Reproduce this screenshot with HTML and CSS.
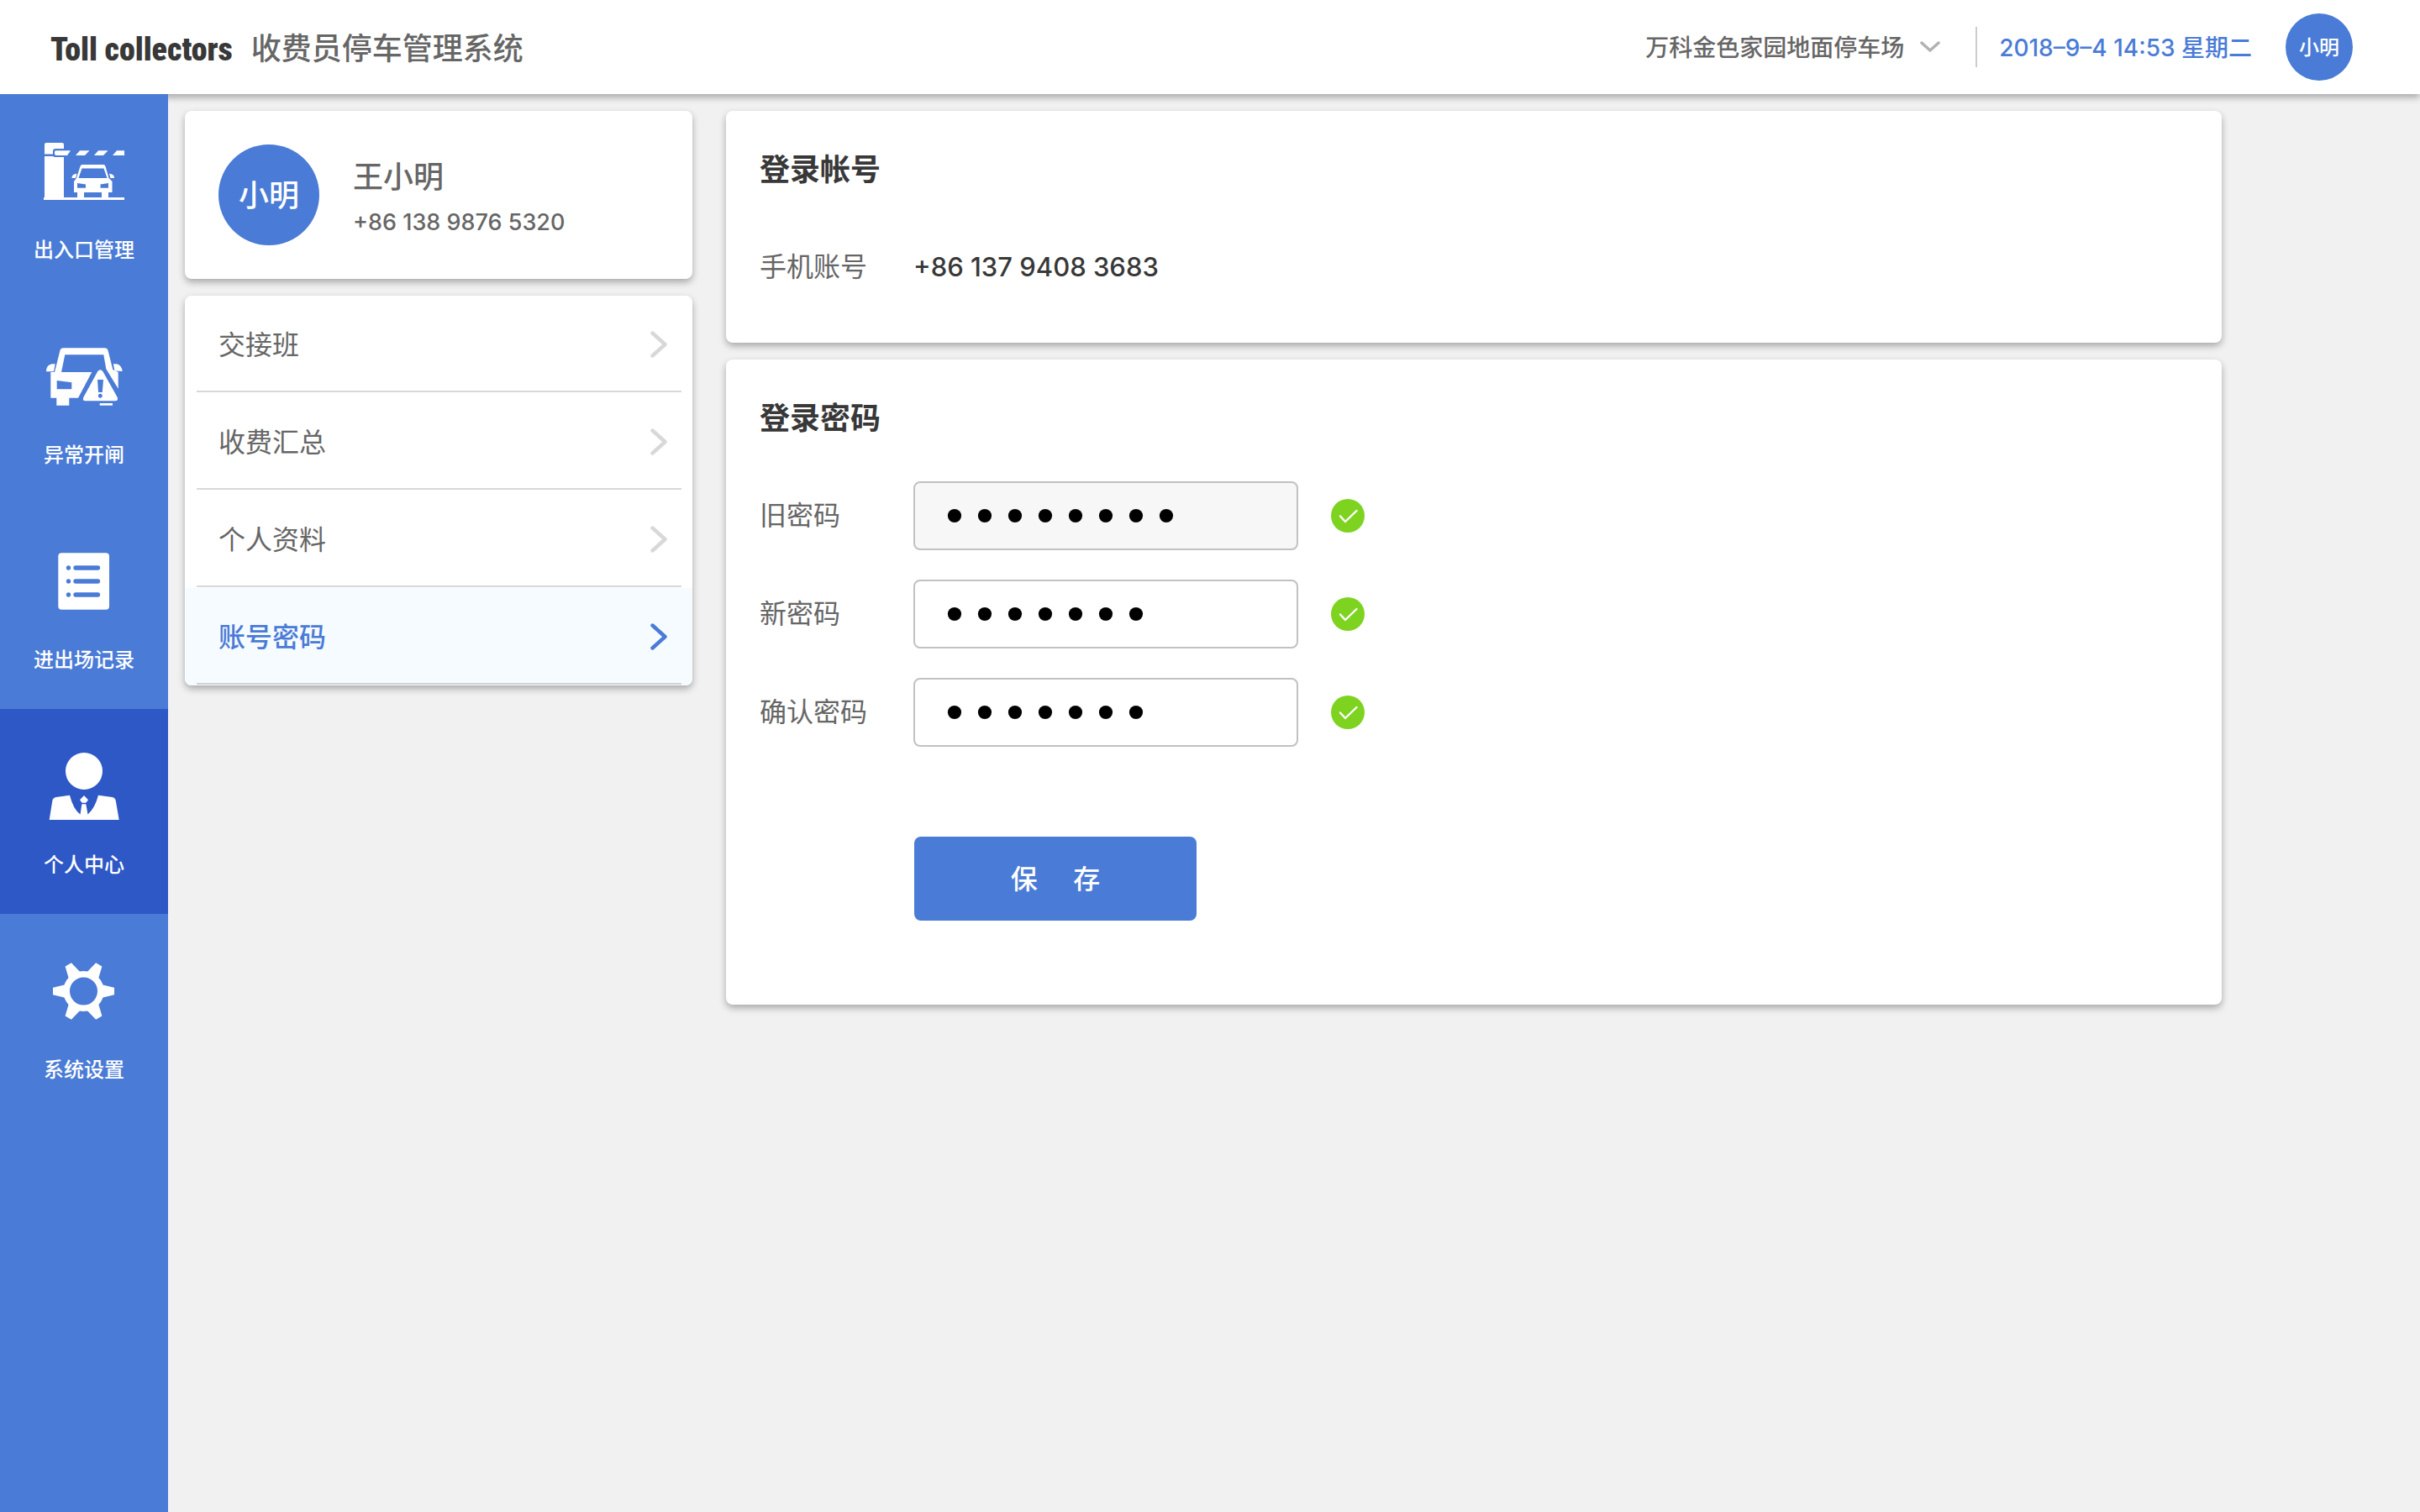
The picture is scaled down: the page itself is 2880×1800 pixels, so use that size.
FILE: index.html
```html
<!DOCTYPE html>
<html lang="zh-CN">
<head>
<meta charset="utf-8">
<meta name="viewport" content="width=device-width, initial-scale=1">
<title>收费员停车管理系统</title>
<link rel="stylesheet" href="styles.css">
</head>
<body>
<svg class="sprite" aria-hidden="true">
  <symbol id="arrow" viewBox="0 0 20 32"><path d="M2.500 2.500L17.500 16L2.500 29.500" fill="none" stroke="currentColor" stroke-width="4.400" stroke-linecap="round" stroke-linejoin="round"/></symbol>
  <symbol id="check" viewBox="0 0 40 40"><circle cx="20" cy="20" r="20" fill="#7ed321"/><path d="M11 20.500L17 27L30.500 14" fill="none" stroke="#fff" stroke-width="2.400" stroke-linecap="round" stroke-linejoin="round"/></symbol>
</svg>

<header class="topbar">
  <h1 class="brand"><span class="brand-en">Toll collectors</span><span>收费员停车管理系统</span></h1>
  <div class="topbar-tools">
    <label class="lot">
      <select class="lot-select" aria-label="停车场">
        <option>万科金色家园地面停车场</option>
      </select>
      <svg class="lot-arrow" viewBox="0 0 24 14" aria-hidden="true"><path d="M2 2L12 11L22 2" fill="none" stroke="#b2b2b2" stroke-width="3.500" stroke-linecap="round" stroke-linejoin="round"/></svg>
    </label>
    <time class="clock" datetime="2018-09-04T14:53">2018–9–4 14:53 星期二</time>
    <span class="avatar">小明</span>
  </div>
</header>

<div class="shell">
  <nav class="sidebar" aria-label="主导航">
    <a class="side-item" href="#gate">
      <svg class="side-icon" viewBox="0 0 100 80" fill="#fff" aria-hidden="true">
        <path d="M5 6H24Q26 6 26 8V13H16Q13 13 13 16V19.500H3V8Q3 6 5 6Z"/>
        <path d="M3 22H13Q14 23 16 23H26V72H3Z"/>
        <path d="M2 71H98V74H2Z"/>
        <path d="M16 15.300H34L30 21H17Q15 21 15 19V16.300Z"/>
        <path d="M45 15.300H56.500L51 21H40ZM67 15.300H78.500L73 21H62ZM89 15.300H98V21H84Z"/>
        <path fill-rule="evenodd" d="M48 32H73Q75 32 75.500 34L79.500 48L83.500 52V65H79V72H71V65H50V72H42V65H38V52L41 48L45.500 34Q46 32 48 32ZM47.500 36.500L43.500 48H77.500L73.500 36.500ZM42 54V59.700H52V55.500ZM79 54V59.700H69.500V55.500Z"/>
        <path d="M35.400 48Q35.500 43 41.500 42.700L40 48ZM86 48Q86 43 80 42.700L81.500 48Z"/>
      </svg>
      <span>出入口管理</span>
    </a>
    <a class="side-item" href="#abnormal">
      <svg class="side-icon" viewBox="0 0 100 80" fill="#fff" aria-hidden="true">
        <path fill-rule="evenodd" d="M25.500 6.300H74.500Q77.800 6.300 78.600 9.500L84.300 32L90.700 35V54.700L76.300 31.300L73.300 14.300H27.300L23 35H59.300L43 65.700H32.300V74.700H17.300V65.700H10.300V35H15L21.400 9.500Q22.200 6.300 25.500 6.300ZM17.700 45V55.300H35.300V47.300Z"/>
        <path d="M5 34.300Q5 26.500 12 25.300H15.700L14 34.300ZM95.700 34Q94.500 26.500 89 25.300H84.800L86.500 33.500Z"/>
        <path fill-rule="evenodd" d="M66.300 34Q69.300 30.500 72.300 34L89.700 65Q91 69.300 87 69.300H51.600Q47.700 69.300 49.300 65ZM66 44L67 59H71.800L73 44ZM69.300 60.800A2.500 2.500 0 1 0 69.310 60.800Z"/>
        <path d="M68.700 72H84V74.700H68.700Z"/>
      </svg>
      <span>异常开闸</span>
    </a>
    <a class="side-item" href="#records">
      <svg class="side-icon" viewBox="0 0 100 80" aria-hidden="true">
        <rect x="19.300" y="6.300" width="60.700" height="67.400" rx="4" fill="#fff"/>
        <path d="M40 24H66.500M40 40H66.500M40 56H66.500M31.500 24H31.510M31.500 40H31.510M31.500 56H31.510" stroke="#4a7bd6" stroke-width="5.300" stroke-linecap="round"/>
      </svg>
      <span>进出场记录</span>
    </a>
    <a class="side-item is-active" href="#profile" aria-current="page">
      <svg class="side-icon" viewBox="0 0 100 80" fill="#fff" aria-hidden="true">
        <circle cx="50" cy="22" r="22"/>
        <path d="M8.700 80L12.300 57.500Q12.900 53.500 16.800 53L33 50.700Q37 67 45.500 73.500L47.400 61.300H52.300L54.500 73.500Q63 66 67 50.700L83.500 53Q87.200 53.500 87.800 57.500L91.700 80Z"/>
        <path d="M50 51L55 56.300L52.300 59.700H47.700L45 56.300Z"/>
      </svg>
      <span>个人中心</span>
    </a>
    <a class="side-item" href="#settings">
      <svg class="side-icon" viewBox="0 0 100 80" aria-hidden="true">
        <g transform="translate(49.500 40)" fill="#fff">
          <circle r="20.300" fill="none" stroke="#fff" stroke-width="7.600"/>
          <path id="tooth" d="M20 -9L23 -7.500L36.500 -4.200V4.200L23 7.500L20 9Z"/>
          <use href="#tooth" transform="rotate(60)"/>
          <use href="#tooth" transform="rotate(120)"/>
          <use href="#tooth" transform="rotate(180)"/>
          <use href="#tooth" transform="rotate(240)"/>
          <use href="#tooth" transform="rotate(300)"/>
        </g>
      </svg>
      <span>系统设置</span>
    </a>
  </nav>

  <main class="content">
    <aside class="side-panel">
      <section class="card user">
        <span class="avatar avatar-large">小明</span>
        <div>
          <p class="user-name">王小明</p>
          <p class="user-phone">+86 138 9876 5320</p>
        </div>
      </section>
      <nav class="card menu" aria-label="个人中心">
        <a class="menu-item" href="#shift"><span>交接班</span><svg class="menu-arrow" aria-hidden="true"><use href="#arrow"/></svg></a>
        <a class="menu-item" href="#summary"><span>收费汇总</span><svg class="menu-arrow" aria-hidden="true"><use href="#arrow"/></svg></a>
        <a class="menu-item" href="#info"><span>个人资料</span><svg class="menu-arrow" aria-hidden="true"><use href="#arrow"/></svg></a>
        <a class="menu-item is-active" href="#password" aria-current="page"><span>账号密码</span><svg class="menu-arrow" aria-hidden="true"><use href="#arrow"/></svg></a>
      </nav>
    </aside>

    <div class="details">
      <section class="card panel">
        <h2 class="panel-title">登录帐号</h2>
        <dl class="account">
          <dt class="field-label">手机账号</dt>
          <dd class="account-value">+86 137 9408 3683</dd>
        </dl>
      </section>
      <section class="card panel panel-password">
        <h2 class="panel-title">登录密码</h2>
        <form class="form">
          <div class="field">
            <label class="field-label" for="old-password">旧密码</label>
            <input class="field-input is-filled" id="old-password" type="password" value="12345678">
            <svg class="field-check" aria-hidden="true"><use href="#check"/></svg>
          </div>
          <div class="field">
            <label class="field-label" for="new-password">新密码</label>
            <input class="field-input" id="new-password" type="password" value="1234567">
            <svg class="field-check" aria-hidden="true"><use href="#check"/></svg>
          </div>
          <div class="field">
            <label class="field-label" for="confirm-password">确认密码</label>
            <input class="field-input" id="confirm-password" type="password" value="1234567">
            <svg class="field-check" aria-hidden="true"><use href="#check"/></svg>
          </div>
          <button class="save" type="button">保&nbsp;&nbsp;&nbsp;&nbsp;&nbsp;存</button>
        </form>
      </section>
    </div>
  </main>
</div>
</body>
</html>
```
FILE: styles.css
```css
:root {
  --blue: #4a7bd6;
  --blue-dark: #2d58c6;
  --text: #383838;
  --text-soft: #666;
  --line: #d8d8d8;
  --shadow: 0 4px 8px rgba(0, 0, 0, 0.3);
}

* {
  box-sizing: border-box;
}

body,
h1,
h2,
p,
dl,
dd {
  margin: 0;
}

body {
  display: flex;
  flex-direction: column;
  min-height: 100vh;
  background: #f1f1f1;
  color: var(--text-soft);
  font-family: Inter, "Noto Sans CJK SC", sans-serif;
  font-size: 32px;
  line-height: 48px;
}

a {
  color: inherit;
  text-decoration: none;
}

.sprite {
  display: none;
}

/* Top bar */
.topbar {
  display: flex;
  align-items: center;
  justify-content: space-between;
  height: 112px;
  padding: 0 80px 0 60px;
  background: #fff;
  box-shadow: var(--shadow);
}

.brand {
  display: flex;
  align-items: center;
  gap: 22px;
  padding-top: 4px;
  font-size: 36px;
  font-weight: 500;
}

.brand-en {
  padding-top: 2px;
  color: var(--text);
  font-family: "Futura Condensed", "Roboto Condensed", "Open Sans Condensed", sans-serif;
  font-size: 38px;
  font-weight: 900;
}

.topbar-tools {
  display: flex;
  align-items: center;
  font-size: 28px;
  font-weight: 500;
}

.lot {
  display: flex;
  align-items: center;
  gap: 18px;
  height: 48px;
  padding-right: 42px;
  border-right: 2px solid #ccc;
}

.lot-select {
  padding: 2px 0 0;
  border: 0;
  appearance: none;
  background: none;
  color: inherit;
  font: inherit;
}

.lot-arrow {
  width: 24px;
  height: 14px;
}

.clock {
  margin: 0 40px 0 26px;
  padding-top: 2px;
  color: var(--blue);
}

.avatar {
  display: flex;
  align-items: center;
  justify-content: center;
  width: 80px;
  height: 80px;
  padding-top: 2px;
  border-radius: 50%;
  background: var(--blue);
  color: #fff;
  font-size: 24px;
  font-weight: 500;
}

.avatar-large {
  width: 120px;
  height: 120px;
  font-size: 36px;
}

/* Main navigation */
.shell {
  display: flex;
  flex: 1;
}

.sidebar {
  position: relative;
  flex: 0 0 200px;
  background: var(--blue);
  color: #fff;
}

.side-item {
  display: flex;
  flex-direction: column;
  align-items: center;
  gap: 36px;
  height: 244px;
  padding-top: 52px;
  font-size: 24px;
  font-weight: 500;
  line-height: 36px;
}

.side-item.is-active {
  background: var(--blue-dark);
}

.side-icon {
  width: 100px;
  height: 80px;
}

/* Page content */
.content {
  display: flex;
  flex: 1;
  align-items: flex-start;
  gap: 40px;
  padding: 20px;
}

.side-panel {
  display: grid;
  flex: 0 0 604px;
  gap: 20px;
}

.details {
  display: grid;
  flex: 1;
  gap: 20px;
  max-width: 1780px;
}

.card {
  overflow: hidden;
  border-radius: 8px;
  background: #fff;
  box-shadow: var(--shadow);
}

.user {
  display: flex;
  align-items: center;
  gap: 40px;
  padding: 40px;
}

.user-name {
  font-size: 36px;
  font-weight: 500;
  line-height: 66px;
}

.user-phone {
  font-size: 27px;
  font-weight: 500;
  line-height: 42px;
}

.menu-item {
  position: relative;
  display: flex;
  align-items: center;
  justify-content: space-between;
  height: 116px;
  padding: 0 30px 0 40px;
}

.menu-item span {
  padding-top: 2px;
}

.menu-item::after {
  position: absolute;
  right: 13px;
  bottom: 1px;
  left: 14px;
  border-bottom: 2px solid var(--line);
  content: "";
}

.menu-item.is-active {
  background: #f6fbff;
  color: var(--blue);
  font-weight: 500;
}

.menu-item.is-active::after {
  border-color: #cdd2d6;
}

.menu-arrow {
  width: 20px;
  height: 32px;
  color: var(--line);
}

.is-active .menu-arrow {
  color: var(--blue);
}

/* Panels */
.panel {
  padding: 46px 40px 66px;
}

.panel-password {
  padding-bottom: 100px;
}

.panel-title {
  color: var(--text);
  font-size: 36px;
  font-weight: 700;
}

.account {
  display: flex;
  align-items: center;
  margin-top: 68px;
}

.account-value {
  color: var(--text);
  font-size: 31px;
  font-weight: 500;
}

.form {
  display: grid;
  gap: 35px;
  margin-top: 51px;
}

.field {
  display: flex;
  align-items: center;
}

.field-label {
  flex: 0 0 183px;
}

.field-input {
  width: 458px;
  height: 82px;
  margin-right: 39px;
  padding: 8px 29px 0;
  border: 2px solid #c1c1c1;
  border-radius: 8px;
  outline: 0;
  background: #fff;
  color: #000;
  font-family: "Liberation Mono", monospace;
  font-size: 60px;
}

.field-input.is-filled {
  background: #f7f7f7;
}

.field-check {
  width: 40px;
  height: 40px;
}

.save {
  width: 336px;
  height: 100px;
  margin: 72px 0 0 184px;
  padding: 2px 0 0;
  border: 0;
  border-radius: 8px;
  background: var(--blue);
  color: #fff;
  font: inherit;
  font-weight: 500;
}
```
